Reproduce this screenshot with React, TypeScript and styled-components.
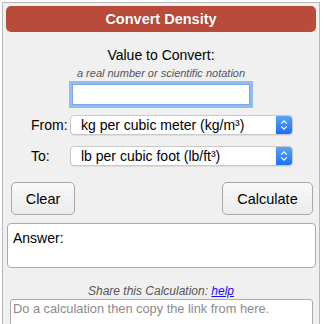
import styled, { createGlobalStyle } from 'styled-components';

const GlobalStyle = createGlobalStyle`
  body {
    margin: 0;
    padding: 0;
    background: #ffffff;
    font-family: "Liberation Sans", Arial, sans-serif;
    overflow: hidden;
  }
`;

const Page = styled.div`
  box-sizing: border-box;
  height: 324px;
  padding: 2px 2px 0;
  overflow: hidden;
`;

const Panel = styled.div`
  box-sizing: border-box;
  width: 318px;
  height: 340px;
  padding: 3px;
  border: 1px solid #b8b8b8;
  background-color: #f0f0f0;
`;

const Header = styled.div`
  height: 26px;
  border-radius: 5px;
  background-color: #b84b3a;
  color: #ffffff;
  font-size: 14.5px;
  font-weight: bold;
  line-height: 26px;
  text-align: center;
  text-shadow: 0 0 1px rgba(0, 0, 0, 0.25);
`;

const Title = styled.div`
  margin-top: 15px;
  font-size: 14px;
  line-height: 16px;
  color: #000000;
  text-align: center;
`;

const Hint = styled.div`
  margin-top: 4px;
  font-size: 11px;
  font-style: italic;
  line-height: 13px;
  color: #555555;
  text-align: center;
`;

const ValueInput = styled.input`
  display: block;
  box-sizing: border-box;
  width: 184px;
  height: 27px;
  margin: 1px auto 0;
  border: 3px solid #93bdf2;
  outline: 1px solid #7aa9e6;
  outline-offset: -4px;
  background: #ffffff;
`;

const SelectRow = styled.div<{ $top: number }>`
  display: flex;
  align-items: center;
  margin-top: ${(p) => p.$top}px;
  padding-left: 25px;
`;

const Label = styled.div`
  width: 39px;
  font-size: 14px;
  color: #000000;
`;

const SelectBox = styled.div`
  box-sizing: border-box;
  display: flex;
  width: 223px;
  height: 20px;
  border: 1px solid #c9c9c9;
  border-radius: 4px;
  background: #ffffff;
  box-shadow: 0 1px 1px rgba(0, 0, 0, 0.08);
  overflow: hidden;
`;

const SelectText = styled.div`
  flex: 1;
  padding-left: 10px;
  font-size: 14px;
  line-height: 18px;
  color: #000000;
  white-space: nowrap;
`;

const SelectArrow = styled.div`
  display: flex;
  align-items: center;
  justify-content: center;
  width: 16px;
  background: linear-gradient(#5ba3fb, #1b6ff4);
`;

const ButtonRow = styled.div`
  display: flex;
  justify-content: space-between;
  margin-top: 16px;
  padding: 0 3px 0 5px;
`;

const Button = styled.button<{ $width: number }>`
  box-sizing: border-box;
  width: ${(p) => p.$width}px;
  height: 33px;
  border: 1px solid #a8a8a8;
  border-radius: 5px;
  background: linear-gradient(#f8f8f8, #ececec);
  font-family: "Liberation Sans", Arial, sans-serif;
  font-size: 14.5px;
  color: #000000;
  padding: 0;
`;

const AnswerBox = styled.div`
  box-sizing: border-box;
  height: 45px;
  margin: 8px 0 0 1px;
  padding: 6px 5px;
  border: 1px solid #ababab;
  border-radius: 4px;
  background: #ffffff;
  font-size: 14px;
  line-height: 16px;
  color: #000000;
`;

const ShareLine = styled.div`
  margin-top: 16px;
  font-size: 12px;
  font-style: italic;
  line-height: 14px;
  color: #555555;
  text-align: center;

  a {
    color: #1a0dff;
    text-decoration: underline;
  }
`;

const ShareArea = styled.textarea`
  display: block;
  box-sizing: border-box;
  width: 303px;
  height: 40px;
  margin: 1px 0 0 4px;
  padding: 1px 2px;
  border: 1px solid #ababab;
  border-radius: 3px;
  background: #ffffff;
  font-family: "Liberation Sans", Arial, sans-serif;
  font-size: 12.8px;
  resize: none;

  &::placeholder {
    color: #8a8a8a;
  }
`;

const Chevrons = () => (
  <svg width="8" height="12" viewBox="0 0 8 12">
    <path d="M1.2 4.6 L4 1.8 L6.8 4.6 M1.2 7.4 L4 10.2 L6.8 7.4" fill="none" stroke="#ffffff" strokeWidth="1.3" />
  </svg>
);

export default function App() {
  return (
    <Page>
      <GlobalStyle />
      <Panel>
        <Header>Convert Density</Header>
        <Title>Value to Convert:</Title>
        <Hint>a real number or scientific notation</Hint>
        <ValueInput type="text" />
        <SelectRow $top={7}>
          <Label>From:</Label>
          <SelectBox>
            <SelectText>kg per cubic meter (kg/m³)</SelectText>
            <SelectArrow>
              <Chevrons />
            </SelectArrow>
          </SelectBox>
        </SelectRow>
        <SelectRow $top={11}>
          <Label>To:</Label>
          <SelectBox>
            <SelectText>lb per cubic foot (lb/ft³)</SelectText>
            <SelectArrow>
              <Chevrons />
            </SelectArrow>
          </SelectBox>
        </SelectRow>
        <ButtonRow>
          <Button $width={64}>Clear</Button>
          <Button $width={91}>Calculate</Button>
        </ButtonRow>
        <AnswerBox>Answer:</AnswerBox>
        <ShareLine>
          Share this Calculation: <a href="#">help</a>
        </ShareLine>
        <ShareArea placeholder="Do a calculation then copy the link from here." />
      </Panel>
    </Page>
  );
}
